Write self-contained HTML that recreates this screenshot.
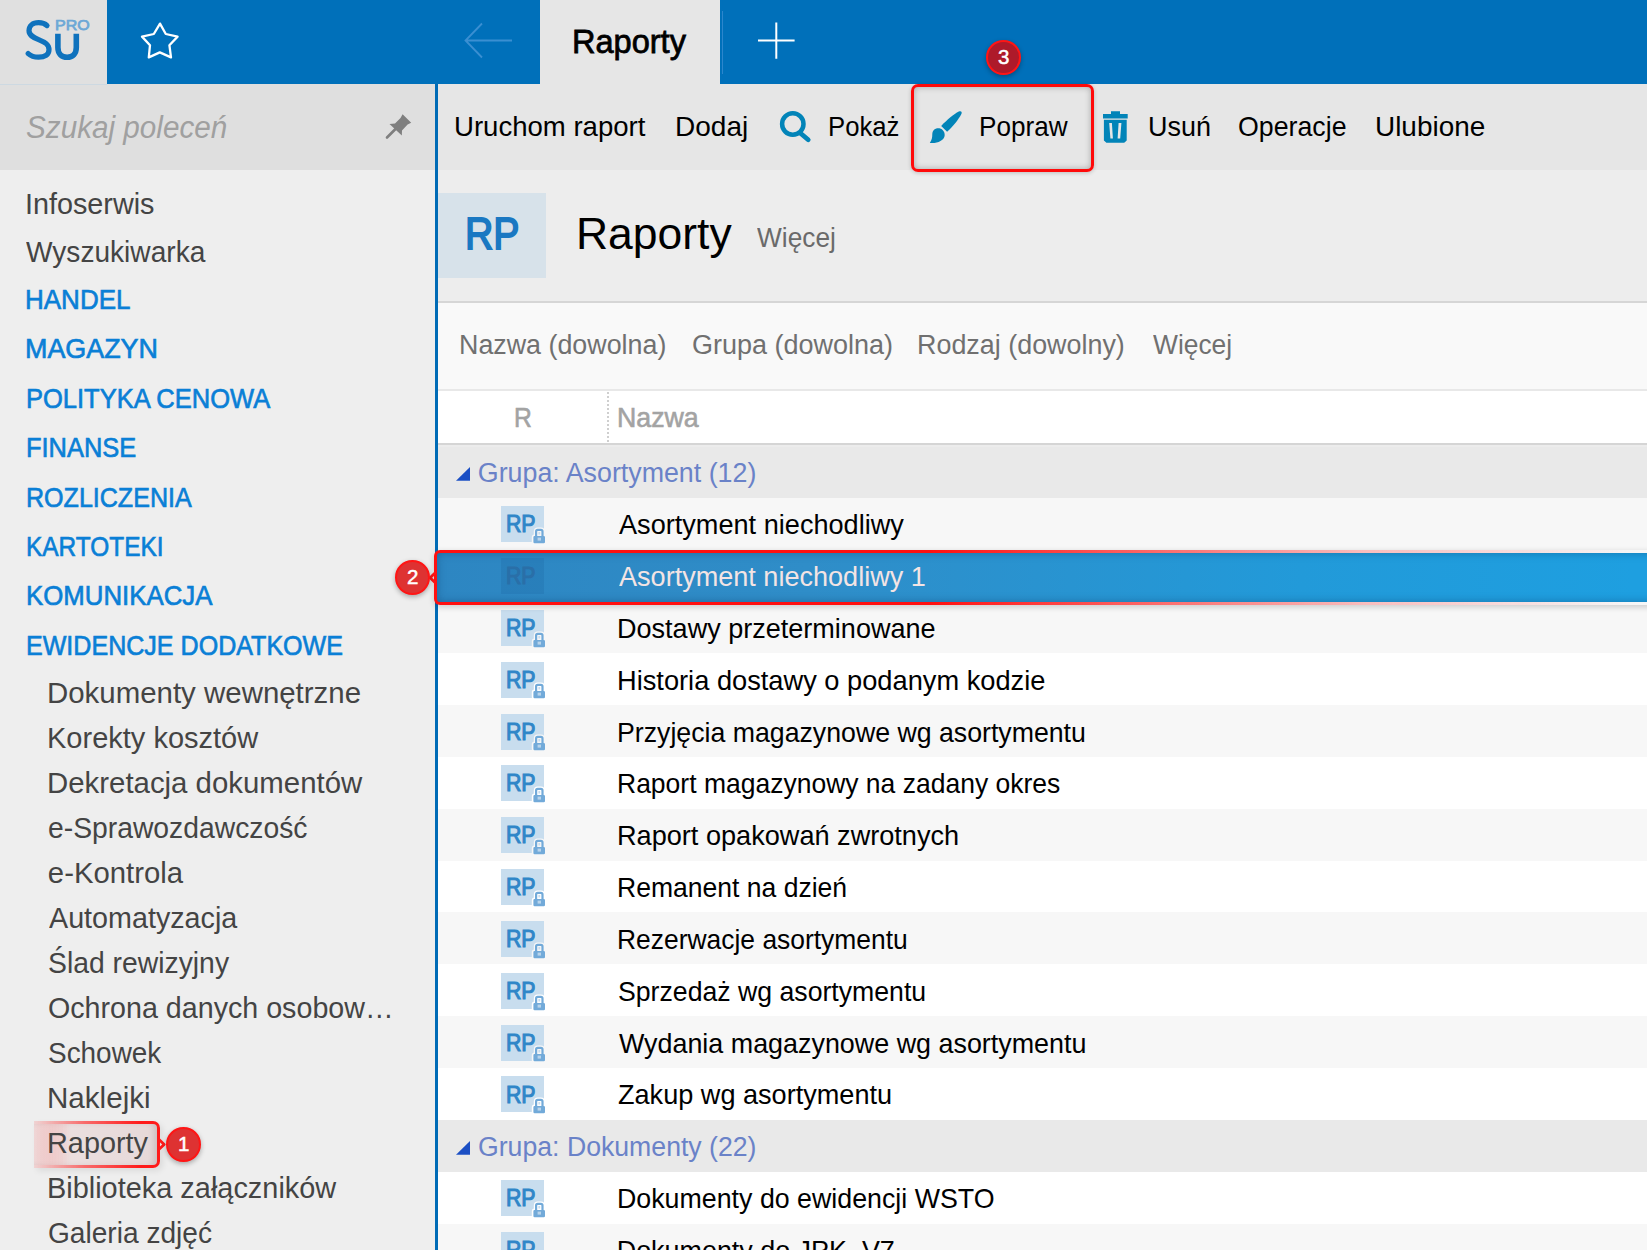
<!DOCTYPE html>
<html><head><meta charset="utf-8"><style>
html,body{margin:0;padding:0;}
body{width:1647px;height:1250px;overflow:hidden;position:relative;background:#eeeeee;font-family:"Liberation Sans",sans-serif;}
.t{position:absolute;white-space:nowrap;line-height:1;transform-origin:0 0;}
.r{position:absolute;}
</style></head><body>
<div class="r" style="left:0px;top:0px;width:107px;height:84px;background:#e0e0e0;"></div>
<div class="r" style="left:107px;top:0px;width:1540px;height:84px;background:#0070ba;"></div>
<svg class="r" style="left:0;top:0" width="200" height="84" viewBox="0 0 200 84">
<path d="M47 25.6 C44.8 23.4 42 22.7 38.6 22.7 C32.5 22.7 29 26 29 30.6 C29 35.2 32.6 37.2 38.6 39.6 C45 42.2 49 44.4 49 49.8 C49 54.6 44.8 57.2 38.6 57.2 C33.8 57.2 30.6 55.8 28.2 53.6" fill="none" stroke="#0f72bd" stroke-width="5.2" stroke-linecap="round"/>
<path d="M57.9 33.7 V47.6 C57.9 53.6 61.6 57.3 67.1 57.3 C72.6 57.3 76.3 53.6 76.3 47.6 V33.7" fill="none" stroke="#0f72bd" stroke-width="5.6"/>
<path d="M30 11.6 L35.8 22 L47.6 24.6 L39.4 33.2 L41 45.4 L29.8 40.4 L18.8 45.4 L20 33.2 L12 24.6 L23.8 22 Z" transform="translate(130,12)" fill="none" stroke="#fff" stroke-width="2.3" stroke-linejoin="round"/>
</svg>
<div class="t" style="left:54.66px;top:17.48px;font-size:15.2px;color:#6da8d6;transform:scaleX(1.0532);-webkit-text-stroke:0.75px #6da8d6;">PRO</div>
<svg class="r" style="left:455px;top:15px" width="70" height="52" viewBox="0 0 70 52">
<path d="M57 25.5 H11 M27 8.5 L10.5 25.5 L27 42.5" fill="none" stroke="#3a8fd2" stroke-width="1.8"/>
</svg>
<div class="r" style="left:540px;top:0px;width:180px;height:84px;background:#e6e6e6;"></div>
<div class="t" style="left:572.27px;top:23.70px;font-size:34px;color:#000;transform:scaleX(0.9567);-webkit-text-stroke:0.8px #000;">Raporty</div>
<div class="r" style="left:722px;top:11px;width:1px;height:63px;background:#2c86cc;"></div>
<svg class="r" style="left:750px;top:15px" width="52" height="52" viewBox="0 0 52 52">
<path d="M26.3 7.5 V43.8 M8 25.6 H44.6" fill="none" stroke="#fff" stroke-width="2"/>
</svg>
<div class="r" style="left:0px;top:84px;width:435px;height:1166px;background:#eeeeee;"></div>
<div class="r" style="left:107px;top:84px;width:328px;height:1px;background:#dfdfdf;"></div>
<div class="r" style="left:0px;top:84px;width:107px;height:1px;background:#cdd9e2;"></div>
<div class="r" style="left:0px;top:85px;width:435px;height:85px;background:#dfdfdf;"></div>
<div class="t" style="left:26.46px;top:112.35px;font-size:31px;color:#a0a0a0;font-style:italic;transform:scaleX(0.9572);">Szukaj poleceń</div>
<svg class="r" style="left:370px;top:100px" width="60" height="60" viewBox="0 0 60 60">
<path d="M32.6 14.3 L41.2 22.8 L37.6 24.6 L32 30.5 L31.8 35.5 L19.5 24 L25 23.5 L30.5 18 Z" fill="#7f7f7f"/>
<path d="M25.5 29 L17 37.5" stroke="#7f7f7f" stroke-width="2.6" stroke-linecap="round"/>
</svg>
<div class="r" style="left:435px;top:84px;width:3px;height:1166px;background:#006bb6;"></div>
<div class="t" style="left:25.12px;top:188.83px;font-size:29.5px;color:#444444;transform:scaleX(0.9752);">Infoserwis</div>
<div class="t" style="left:26.08px;top:237.23px;font-size:29.5px;color:#444444;transform:scaleX(0.9526);">Wyszukiwarka</div>
<div class="t" style="left:25.48px;top:285.07px;font-size:28.5px;color:#0a7fd6;transform:scaleX(0.9122);-webkit-text-stroke:0.7px #0a7fd6;">HANDEL</div>
<div class="t" style="left:25.41px;top:334.17px;font-size:28.5px;color:#0a7fd6;transform:scaleX(0.9431);-webkit-text-stroke:0.7px #0a7fd6;">MAGAZYN</div>
<div class="t" style="left:25.53px;top:384.07px;font-size:28.5px;color:#0a7fd6;transform:scaleX(0.8946);-webkit-text-stroke:0.7px #0a7fd6;">POLITYKA CENOWA</div>
<div class="t" style="left:25.53px;top:433.07px;font-size:28.5px;color:#0a7fd6;transform:scaleX(0.8918);-webkit-text-stroke:0.7px #0a7fd6;">FINANSE</div>
<div class="t" style="left:25.56px;top:482.77px;font-size:28.5px;color:#0a7fd6;transform:scaleX(0.8790);-webkit-text-stroke:0.7px #0a7fd6;">ROZLICZENIA</div>
<div class="t" style="left:25.62px;top:532.07px;font-size:28.5px;color:#0a7fd6;transform:scaleX(0.8566);-webkit-text-stroke:0.7px #0a7fd6;">KARTOTEKI</div>
<div class="t" style="left:25.50px;top:581.38px;font-size:28.5px;color:#0a7fd6;transform:scaleX(0.9057);-webkit-text-stroke:0.7px #0a7fd6;">KOMUNIKACJA</div>
<div class="t" style="left:25.56px;top:630.57px;font-size:28.5px;color:#0a7fd6;transform:scaleX(0.8793);-webkit-text-stroke:0.7px #0a7fd6;">EWIDENCJE DODATKOWE</div>
<div class="r" style="left:34px;top:1121px;width:126px;height:47px;box-sizing:border-box;border-radius:0 7px 7px 0;
border:3px solid transparent;border-left:0;
background:linear-gradient(90deg, rgba(236,226,226,0.2), #ebdfdf 30%, #e6d8d8) padding-box,
linear-gradient(90deg, rgba(255,20,20,0.12) 0%, rgba(255,20,20,0.6) 40%, #ff1a1a 85%) border-box;
box-shadow: inset -5px 0 6px -2px rgba(0,0,0,0.12), 3px 3px 6px rgba(0,0,0,0.08);"></div>
<svg class="r" style="left:155px;top:1134px" width="14" height="22" viewBox="0 0 14 22"><path d="M3.5 5 L9.2 10.4 L3.5 15.8" fill="none" stroke="#ff1a1a" stroke-width="2.8" stroke-linejoin="round"/></svg>
<div class="t" style="left:46.71px;top:678.00px;font-size:29.3px;color:#444444;transform:scaleX(1.0045);">Dokumenty wewnętrzne</div>
<div class="t" style="left:46.75px;top:723.00px;font-size:29.3px;color:#444444;transform:scaleX(0.9900);">Korekty kosztów</div>
<div class="t" style="left:46.72px;top:768.00px;font-size:29.3px;color:#444444;transform:scaleX(1.0029);">Dekretacja dokumentów</div>
<div class="t" style="left:47.89px;top:813.00px;font-size:29.3px;color:#444444;transform:scaleX(0.9658);">e-Sprawozdawczość</div>
<div class="t" style="left:47.85px;top:858.00px;font-size:29.3px;color:#444444;">e-Kontrola</div>
<div class="t" style="left:48.98px;top:903.00px;font-size:29.3px;color:#444444;transform:scaleX(0.9797);">Automatyzacja</div>
<div class="t" style="left:47.77px;top:948.00px;font-size:29.3px;color:#444444;transform:scaleX(0.9669);">Ślad rewizyjny</div>
<div class="t" style="left:47.76px;top:993.00px;font-size:29.3px;color:#444444;transform:scaleX(0.9779);">Ochrona danych osobow…</div>
<div class="t" style="left:47.79px;top:1038.00px;font-size:29.3px;color:#444444;transform:scaleX(0.9532);">Schowek</div>
<div class="t" style="left:46.70px;top:1083.00px;font-size:29.3px;color:#444444;transform:scaleX(1.0097);">Naklejki</div>
<div class="t" style="left:47.46px;top:1128.00px;font-size:29.3px;color:#444444;transform:scaleX(0.9848);">Raporty</div>
<div class="t" style="left:46.76px;top:1173.00px;font-size:29.3px;color:#444444;transform:scaleX(0.9867);">Biblioteka załączników</div>
<div class="t" style="left:47.66px;top:1218.00px;font-size:29.3px;color:#444444;transform:scaleX(0.9594);">Galeria zdjęć</div>
<div class="r" style="left:438px;top:84px;width:1209px;height:86px;background:#e6e6e6;"></div>
<div class="t" style="left:453.56px;top:112.80px;font-size:27.3px;color:#000;transform:scaleX(1.0093);">Uruchom raport</div>
<div class="t" style="left:675.29px;top:112.80px;font-size:27.3px;color:#000;transform:scaleX(1.0260);">Dodaj</div>
<div class="t" style="left:828.38px;top:112.80px;font-size:27.3px;color:#000;transform:scaleX(0.9412);">Pokaż</div>
<div class="t" style="left:978.95px;top:112.80px;font-size:27.3px;color:#000;transform:scaleX(0.9571);">Popraw</div>
<div class="t" style="left:1147.60px;top:112.80px;font-size:27.3px;color:#000;transform:scaleX(0.9871);">Usuń</div>
<div class="t" style="left:1237.98px;top:112.80px;font-size:27.3px;color:#000;transform:scaleX(0.9799);">Operacje</div>
<div class="t" style="left:1375.13px;top:112.80px;font-size:27.3px;color:#000;transform:scaleX(1.0230);">Ulubione</div>
<svg class="r" style="left:770px;top:100px" width="60" height="60" viewBox="0 0 60 60">
<circle cx="22.8" cy="24" r="10.7" fill="none" stroke="#0284b8" stroke-width="4.5"/>
<path d="M30.5 33.2 L38.2 39.8" stroke="#0284b8" stroke-width="4.8" stroke-linecap="round"/>
</svg>
<svg class="r" style="left:920px;top:100px" width="60" height="60" viewBox="0 0 60 60">
<path d="M21.2 25.9 C27 20 34 14 38.8 11.6 C41.2 10.4 42.3 12.2 41.4 14 C38.5 19.5 33 26.5 27.1 31.7 Z" fill="#0284b8"/>
<path d="M9.8 42.9 C11.8 40.2 12.3 37.5 12.3 34 C12.6 29.6 16 27.5 19.5 28.3 C23 29.2 25.3 32.5 24.6 36 C23.6 40.8 17.5 43.6 9.8 42.9 Z" fill="#0284b8"/>
</svg>
<svg class="r" style="left:1090px;top:100px" width="60" height="60" viewBox="0 0 60 60">
<path d="M21 11.3 H30 V13.9 H37.7 V18.5 H13 V13.9 H21 Z" fill="#0284b8"/>
<path d="M13.9 19.7 H36.7 V40.5 L34.2 42.8 H16.4 L13.9 40.5 Z M19.2 23 L20.4 38.5 H22.9 L21.9 23 Z M28.6 23 L27.6 38.5 H30.2 L31.4 23 Z" fill="#0284b8" fill-rule="evenodd"/>
</svg>
<div class="r" style="left:438px;top:170px;width:1209px;height:131px;background:#ededed;"></div>
<div class="r" style="left:438px;top:192.8px;width:108px;height:85px;background:#d7e2ea;"></div>
<div class="t" style="left:465.44px;top:211.35px;font-size:45px;color:#1a78c2;transform:scaleX(0.8726);-webkit-text-stroke:1.8px #1a78c2;">RP</div>
<div class="t" style="left:576.42px;top:211.15px;font-size:45px;color:#000;transform:scaleX(0.9878);">Raporty</div>
<div class="t" style="left:757.08px;top:224.65px;font-size:27px;color:#6a6a6a;transform:scaleX(0.9731);">Więcej</div>
<div class="r" style="left:438px;top:301px;width:1209px;height:2px;background:#d6d6d6;"></div>
<div class="r" style="left:438px;top:303px;width:1209px;height:86px;background:#f9f9f9;"></div>
<div class="t" style="left:459.26px;top:332.05px;font-size:27px;color:#707070;transform:scaleX(0.9939);">Nazwa (dowolna)</div>
<div class="t" style="left:691.92px;top:332.05px;font-size:27px;color:#707070;">Grupa (dowolna)</div>
<div class="t" style="left:917.36px;top:332.05px;font-size:27px;color:#707070;transform:scaleX(0.9963);">Rodzaj (dowolny)</div>
<div class="t" style="left:1153.08px;top:332.05px;font-size:27px;color:#707070;transform:scaleX(0.9769);">Więcej</div>
<div class="r" style="left:438px;top:389px;width:1209px;height:2px;background:#e8e8e8;"></div>
<div class="r" style="left:438px;top:391px;width:1209px;height:52px;background:#ffffff;"></div>
<div class="t" style="left:514.08px;top:403.62px;font-size:27.5px;color:#a3a3a3;transform:scaleX(0.8985);-webkit-text-stroke:0.6px #a3a3a3;">R</div>
<div class="t" style="left:617.11px;top:403.62px;font-size:27.5px;color:#a3a3a3;transform:scaleX(0.9713);-webkit-text-stroke:0.6px #a3a3a3;">Nazwa</div>
<div class="r" style="left:606.5px;top:392px;width:2px;height:54px;background:repeating-linear-gradient(180deg,#cfcfcf 0 2px,transparent 2px 4px)"></div>
<div class="r" style="left:438px;top:443px;width:1209px;height:2px;background:#d5d5d5;"></div>
<div class="r" style="left:438px;top:445px;width:1209px;height:2px;background:#ececec;"></div>
<div class="r" style="left:438px;top:447px;width:1209px;height:51px;background:#e9e9e9;"></div>
<svg class="r" style="left:450px;top:459.75px" width="26" height="26" viewBox="0 0 26 26"><path d="M20 7 V20.8 H6 Z" fill="#1b4fc4"/></svg>
<div class="t" style="left:477.82px;top:459.97px;font-size:26.8px;color:#6a82c8;">Grupa: Asortyment (12)</div>
<div class="r" style="left:438px;top:498px;width:1209px;height:51px;background:#f7f7f7;"></div>
<div class="r" style="left:501px;top:506.10px;width:43px;height:36px;background:#c8ddee"></div>
<div class="t" style="left:506.38px;top:512.20px;font-size:24px;color:#2f86c8;transform:scaleX(0.8863);-webkit-text-stroke:1.1px #2f86c8;">RP</div>
<svg class="r" style="left:531px;top:526.90px" width="17" height="19" viewBox="0 0 17 19">
<path d="M5.1 9 V4.4 Q5.1 2.8 6.7 2.8 H9.9 Q11.5 2.8 11.5 4.4 V9" fill="none" stroke="#f7f7f7" stroke-width="4.6"/>
<rect x="1.6" y="8.2" width="13.2" height="8.8" rx="2" fill="#72aad9" stroke="#f7f7f7" stroke-width="1.6"/>
<path d="M5.1 9 V4.4 Q5.1 2.8 6.7 2.8 H9.9 Q11.5 2.8 11.5 4.4 V9" fill="none" stroke="#72aad9" stroke-width="2.2"/>
<rect x="6.6" y="10.6" width="3.4" height="3" fill="#b8d4ec"/>
</svg>
<div class="t" style="left:618.87px;top:512.13px;font-size:26.9px;color:#000;transform:scaleX(1.0086);">Asortyment niechodliwy</div>
<div class="r" style="left:438px;top:549px;width:1209px;height:52px;background:#f7f7f7;"></div>
<div class="r" style="left:438px;top:601px;width:1209px;height:52px;background:#f7f7f7;"></div>
<div class="r" style="left:501px;top:609.80px;width:43px;height:36px;background:#c8ddee"></div>
<div class="t" style="left:506.38px;top:615.90px;font-size:24px;color:#2f86c8;transform:scaleX(0.8863);-webkit-text-stroke:1.1px #2f86c8;">RP</div>
<svg class="r" style="left:531px;top:630.60px" width="17" height="19" viewBox="0 0 17 19">
<path d="M5.1 9 V4.4 Q5.1 2.8 6.7 2.8 H9.9 Q11.5 2.8 11.5 4.4 V9" fill="none" stroke="#f7f7f7" stroke-width="4.6"/>
<rect x="1.6" y="8.2" width="13.2" height="8.8" rx="2" fill="#72aad9" stroke="#f7f7f7" stroke-width="1.6"/>
<path d="M5.1 9 V4.4 Q5.1 2.8 6.7 2.8 H9.9 Q11.5 2.8 11.5 4.4 V9" fill="none" stroke="#72aad9" stroke-width="2.2"/>
<rect x="6.6" y="10.6" width="3.4" height="3" fill="#b8d4ec"/>
</svg>
<div class="t" style="left:616.74px;top:615.83px;font-size:26.9px;color:#000;transform:scaleX(1.0054);">Dostawy przeterminowane</div>
<div class="r" style="left:438px;top:653px;width:1209px;height:52px;background:#ffffff;"></div>
<div class="r" style="left:501px;top:661.65px;width:43px;height:36px;background:#c8ddee"></div>
<div class="t" style="left:506.38px;top:667.75px;font-size:24px;color:#2f86c8;transform:scaleX(0.8863);-webkit-text-stroke:1.1px #2f86c8;">RP</div>
<svg class="r" style="left:531px;top:682.45px" width="17" height="19" viewBox="0 0 17 19">
<path d="M5.1 9 V4.4 Q5.1 2.8 6.7 2.8 H9.9 Q11.5 2.8 11.5 4.4 V9" fill="none" stroke="#ffffff" stroke-width="4.6"/>
<rect x="1.6" y="8.2" width="13.2" height="8.8" rx="2" fill="#72aad9" stroke="#ffffff" stroke-width="1.6"/>
<path d="M5.1 9 V4.4 Q5.1 2.8 6.7 2.8 H9.9 Q11.5 2.8 11.5 4.4 V9" fill="none" stroke="#72aad9" stroke-width="2.2"/>
<rect x="6.6" y="10.6" width="3.4" height="3" fill="#b8d4ec"/>
</svg>
<div class="t" style="left:616.72px;top:667.68px;font-size:26.9px;color:#000;transform:scaleX(1.0128);">Historia dostawy o podanym kodzie</div>
<div class="r" style="left:438px;top:705px;width:1209px;height:52px;background:#f7f7f7;"></div>
<div class="r" style="left:501px;top:713.50px;width:43px;height:36px;background:#c8ddee"></div>
<div class="t" style="left:506.38px;top:719.60px;font-size:24px;color:#2f86c8;transform:scaleX(0.8863);-webkit-text-stroke:1.1px #2f86c8;">RP</div>
<svg class="r" style="left:531px;top:734.30px" width="17" height="19" viewBox="0 0 17 19">
<path d="M5.1 9 V4.4 Q5.1 2.8 6.7 2.8 H9.9 Q11.5 2.8 11.5 4.4 V9" fill="none" stroke="#f7f7f7" stroke-width="4.6"/>
<rect x="1.6" y="8.2" width="13.2" height="8.8" rx="2" fill="#72aad9" stroke="#f7f7f7" stroke-width="1.6"/>
<path d="M5.1 9 V4.4 Q5.1 2.8 6.7 2.8 H9.9 Q11.5 2.8 11.5 4.4 V9" fill="none" stroke="#72aad9" stroke-width="2.2"/>
<rect x="6.6" y="10.6" width="3.4" height="3" fill="#b8d4ec"/>
</svg>
<div class="t" style="left:616.77px;top:719.53px;font-size:26.9px;color:#000;transform:scaleX(0.9928);">Przyjęcia magazynowe wg asortymentu</div>
<div class="r" style="left:438px;top:757px;width:1209px;height:52px;background:#ffffff;"></div>
<div class="r" style="left:501px;top:765.35px;width:43px;height:36px;background:#c8ddee"></div>
<div class="t" style="left:506.38px;top:771.45px;font-size:24px;color:#2f86c8;transform:scaleX(0.8863);-webkit-text-stroke:1.1px #2f86c8;">RP</div>
<svg class="r" style="left:531px;top:786.15px" width="17" height="19" viewBox="0 0 17 19">
<path d="M5.1 9 V4.4 Q5.1 2.8 6.7 2.8 H9.9 Q11.5 2.8 11.5 4.4 V9" fill="none" stroke="#ffffff" stroke-width="4.6"/>
<rect x="1.6" y="8.2" width="13.2" height="8.8" rx="2" fill="#72aad9" stroke="#ffffff" stroke-width="1.6"/>
<path d="M5.1 9 V4.4 Q5.1 2.8 6.7 2.8 H9.9 Q11.5 2.8 11.5 4.4 V9" fill="none" stroke="#72aad9" stroke-width="2.2"/>
<rect x="6.6" y="10.6" width="3.4" height="3" fill="#b8d4ec"/>
</svg>
<div class="t" style="left:616.78px;top:771.38px;font-size:26.9px;color:#000;transform:scaleX(0.9853);">Raport magazynowy na zadany okres</div>
<div class="r" style="left:438px;top:809px;width:1209px;height:52px;background:#f7f7f7;"></div>
<div class="r" style="left:501px;top:817.20px;width:43px;height:36px;background:#c8ddee"></div>
<div class="t" style="left:506.38px;top:823.30px;font-size:24px;color:#2f86c8;transform:scaleX(0.8863);-webkit-text-stroke:1.1px #2f86c8;">RP</div>
<svg class="r" style="left:531px;top:838.00px" width="17" height="19" viewBox="0 0 17 19">
<path d="M5.1 9 V4.4 Q5.1 2.8 6.7 2.8 H9.9 Q11.5 2.8 11.5 4.4 V9" fill="none" stroke="#f7f7f7" stroke-width="4.6"/>
<rect x="1.6" y="8.2" width="13.2" height="8.8" rx="2" fill="#72aad9" stroke="#f7f7f7" stroke-width="1.6"/>
<path d="M5.1 9 V4.4 Q5.1 2.8 6.7 2.8 H9.9 Q11.5 2.8 11.5 4.4 V9" fill="none" stroke="#72aad9" stroke-width="2.2"/>
<rect x="6.6" y="10.6" width="3.4" height="3" fill="#b8d4ec"/>
</svg>
<div class="t" style="left:616.73px;top:823.24px;font-size:26.9px;color:#000;transform:scaleX(1.0084);">Raport opakowań zwrotnych</div>
<div class="r" style="left:438px;top:861px;width:1209px;height:51px;background:#ffffff;"></div>
<div class="r" style="left:501px;top:869.05px;width:43px;height:36px;background:#c8ddee"></div>
<div class="t" style="left:506.38px;top:875.15px;font-size:24px;color:#2f86c8;transform:scaleX(0.8863);-webkit-text-stroke:1.1px #2f86c8;">RP</div>
<svg class="r" style="left:531px;top:889.85px" width="17" height="19" viewBox="0 0 17 19">
<path d="M5.1 9 V4.4 Q5.1 2.8 6.7 2.8 H9.9 Q11.5 2.8 11.5 4.4 V9" fill="none" stroke="#ffffff" stroke-width="4.6"/>
<rect x="1.6" y="8.2" width="13.2" height="8.8" rx="2" fill="#72aad9" stroke="#ffffff" stroke-width="1.6"/>
<path d="M5.1 9 V4.4 Q5.1 2.8 6.7 2.8 H9.9 Q11.5 2.8 11.5 4.4 V9" fill="none" stroke="#72aad9" stroke-width="2.2"/>
<rect x="6.6" y="10.6" width="3.4" height="3" fill="#b8d4ec"/>
</svg>
<div class="t" style="left:616.78px;top:875.08px;font-size:26.9px;color:#000;transform:scaleX(0.9867);">Remanent na dzień</div>
<div class="r" style="left:438px;top:912px;width:1209px;height:52px;background:#f7f7f7;"></div>
<div class="r" style="left:501px;top:920.90px;width:43px;height:36px;background:#c8ddee"></div>
<div class="t" style="left:506.38px;top:927.00px;font-size:24px;color:#2f86c8;transform:scaleX(0.8863);-webkit-text-stroke:1.1px #2f86c8;">RP</div>
<svg class="r" style="left:531px;top:941.70px" width="17" height="19" viewBox="0 0 17 19">
<path d="M5.1 9 V4.4 Q5.1 2.8 6.7 2.8 H9.9 Q11.5 2.8 11.5 4.4 V9" fill="none" stroke="#f7f7f7" stroke-width="4.6"/>
<rect x="1.6" y="8.2" width="13.2" height="8.8" rx="2" fill="#72aad9" stroke="#f7f7f7" stroke-width="1.6"/>
<path d="M5.1 9 V4.4 Q5.1 2.8 6.7 2.8 H9.9 Q11.5 2.8 11.5 4.4 V9" fill="none" stroke="#72aad9" stroke-width="2.2"/>
<rect x="6.6" y="10.6" width="3.4" height="3" fill="#b8d4ec"/>
</svg>
<div class="t" style="left:616.79px;top:926.94px;font-size:26.9px;color:#000;transform:scaleX(0.9826);">Rezerwacje asortymentu</div>
<div class="r" style="left:438px;top:964px;width:1209px;height:52px;background:#ffffff;"></div>
<div class="r" style="left:501px;top:972.75px;width:43px;height:36px;background:#c8ddee"></div>
<div class="t" style="left:506.38px;top:978.85px;font-size:24px;color:#2f86c8;transform:scaleX(0.8863);-webkit-text-stroke:1.1px #2f86c8;">RP</div>
<svg class="r" style="left:531px;top:993.55px" width="17" height="19" viewBox="0 0 17 19">
<path d="M5.1 9 V4.4 Q5.1 2.8 6.7 2.8 H9.9 Q11.5 2.8 11.5 4.4 V9" fill="none" stroke="#ffffff" stroke-width="4.6"/>
<rect x="1.6" y="8.2" width="13.2" height="8.8" rx="2" fill="#72aad9" stroke="#ffffff" stroke-width="1.6"/>
<path d="M5.1 9 V4.4 Q5.1 2.8 6.7 2.8 H9.9 Q11.5 2.8 11.5 4.4 V9" fill="none" stroke="#72aad9" stroke-width="2.2"/>
<rect x="6.6" y="10.6" width="3.4" height="3" fill="#b8d4ec"/>
</svg>
<div class="t" style="left:617.76px;top:978.78px;font-size:26.9px;color:#000;transform:scaleX(0.9913);">Sprzedaż wg asortymentu</div>
<div class="r" style="left:438px;top:1016px;width:1209px;height:52px;background:#f7f7f7;"></div>
<div class="r" style="left:501px;top:1024.60px;width:43px;height:36px;background:#c8ddee"></div>
<div class="t" style="left:506.38px;top:1030.70px;font-size:24px;color:#2f86c8;transform:scaleX(0.8863);-webkit-text-stroke:1.1px #2f86c8;">RP</div>
<svg class="r" style="left:531px;top:1045.40px" width="17" height="19" viewBox="0 0 17 19">
<path d="M5.1 9 V4.4 Q5.1 2.8 6.7 2.8 H9.9 Q11.5 2.8 11.5 4.4 V9" fill="none" stroke="#f7f7f7" stroke-width="4.6"/>
<rect x="1.6" y="8.2" width="13.2" height="8.8" rx="2" fill="#72aad9" stroke="#f7f7f7" stroke-width="1.6"/>
<path d="M5.1 9 V4.4 Q5.1 2.8 6.7 2.8 H9.9 Q11.5 2.8 11.5 4.4 V9" fill="none" stroke="#72aad9" stroke-width="2.2"/>
<rect x="6.6" y="10.6" width="3.4" height="3" fill="#b8d4ec"/>
</svg>
<div class="t" style="left:618.88px;top:1030.63px;font-size:26.9px;color:#000;">Wydania magazynowe wg asortymentu</div>
<div class="r" style="left:438px;top:1068px;width:1209px;height:52px;background:#ffffff;"></div>
<div class="r" style="left:501px;top:1076.45px;width:43px;height:36px;background:#c8ddee"></div>
<div class="t" style="left:506.38px;top:1082.55px;font-size:24px;color:#2f86c8;transform:scaleX(0.8863);-webkit-text-stroke:1.1px #2f86c8;">RP</div>
<svg class="r" style="left:531px;top:1097.25px" width="17" height="19" viewBox="0 0 17 19">
<path d="M5.1 9 V4.4 Q5.1 2.8 6.7 2.8 H9.9 Q11.5 2.8 11.5 4.4 V9" fill="none" stroke="#ffffff" stroke-width="4.6"/>
<rect x="1.6" y="8.2" width="13.2" height="8.8" rx="2" fill="#72aad9" stroke="#ffffff" stroke-width="1.6"/>
<path d="M5.1 9 V4.4 Q5.1 2.8 6.7 2.8 H9.9 Q11.5 2.8 11.5 4.4 V9" fill="none" stroke="#72aad9" stroke-width="2.2"/>
<rect x="6.6" y="10.6" width="3.4" height="3" fill="#b8d4ec"/>
</svg>
<div class="t" style="left:618.12px;top:1082.49px;font-size:26.9px;color:#000;transform:scaleX(1.0075);">Zakup wg asortymentu</div>
<div class="r" style="left:438px;top:1120px;width:1209px;height:52px;background:#e9e9e9;"></div>
<svg class="r" style="left:450px;top:1133.80px" width="26" height="26" viewBox="0 0 26 26"><path d="M20 7 V20.8 H6 Z" fill="#1b4fc4"/></svg>
<div class="t" style="left:477.83px;top:1134.02px;font-size:26.8px;color:#6a82c8;transform:scaleX(0.9946);">Grupa: Dokumenty (22)</div>
<div class="r" style="left:438px;top:1172px;width:1209px;height:52px;background:#ffffff;"></div>
<div class="r" style="left:501px;top:1180.15px;width:43px;height:36px;background:#c8ddee"></div>
<div class="t" style="left:506.38px;top:1186.25px;font-size:24px;color:#2f86c8;transform:scaleX(0.8863);-webkit-text-stroke:1.1px #2f86c8;">RP</div>
<svg class="r" style="left:531px;top:1200.95px" width="17" height="19" viewBox="0 0 17 19">
<path d="M5.1 9 V4.4 Q5.1 2.8 6.7 2.8 H9.9 Q11.5 2.8 11.5 4.4 V9" fill="none" stroke="#ffffff" stroke-width="4.6"/>
<rect x="1.6" y="8.2" width="13.2" height="8.8" rx="2" fill="#72aad9" stroke="#ffffff" stroke-width="1.6"/>
<path d="M5.1 9 V4.4 Q5.1 2.8 6.7 2.8 H9.9 Q11.5 2.8 11.5 4.4 V9" fill="none" stroke="#72aad9" stroke-width="2.2"/>
<rect x="6.6" y="10.6" width="3.4" height="3" fill="#b8d4ec"/>
</svg>
<div class="t" style="left:616.76px;top:1186.19px;font-size:26.9px;color:#000;transform:scaleX(0.9959);">Dokumenty do ewidencji WSTO</div>
<div class="r" style="left:438px;top:1224px;width:1209px;height:51px;background:#f7f7f7;"></div>
<div class="r" style="left:501px;top:1232.00px;width:43px;height:36px;background:#c8ddee"></div>
<div class="t" style="left:506.38px;top:1238.10px;font-size:24px;color:#2f86c8;transform:scaleX(0.8863);-webkit-text-stroke:1.1px #2f86c8;">RP</div>
<svg class="r" style="left:531px;top:1252.80px" width="17" height="19" viewBox="0 0 17 19">
<path d="M5.1 9 V4.4 Q5.1 2.8 6.7 2.8 H9.9 Q11.5 2.8 11.5 4.4 V9" fill="none" stroke="#f7f7f7" stroke-width="4.6"/>
<rect x="1.6" y="8.2" width="13.2" height="8.8" rx="2" fill="#72aad9" stroke="#f7f7f7" stroke-width="1.6"/>
<path d="M5.1 9 V4.4 Q5.1 2.8 6.7 2.8 H9.9 Q11.5 2.8 11.5 4.4 V9" fill="none" stroke="#72aad9" stroke-width="2.2"/>
<rect x="6.6" y="10.6" width="3.4" height="3" fill="#b8d4ec"/>
</svg>
<div class="t" style="left:616.75px;top:1238.04px;font-size:26.9px;color:#000;">Dokumenty do JPK_V7</div>
<div class="r" style="left:434px;top:550.05px;width:1240px;height:55px;box-sizing:border-box;
border:3px solid transparent;border-radius:6px 0 0 6px;
background:linear-gradient(90deg,#2d86c2 0%,#2f8dc8 30%,#229ad9 70%,#1e9fe0 97%) padding-box,
linear-gradient(90deg,#ff1010 0%,#ff1010 40%,rgba(255,16,16,0.25) 75%,rgba(255,16,16,0.0) 97%) border-box;
box-shadow: inset 0 0 8px rgba(0,40,80,0.35), 0 2px 6px rgba(0,0,0,0.18);"></div>
<div class="r" style="left:501px;top:557.95px;width:43px;height:36px;background:rgba(20,90,150,0.18)"></div>
<div class="t" style="left:506.38px;top:564.05px;font-size:24px;color:#2a6fa8;transform:scaleX(0.8863);-webkit-text-stroke:1.1px #2a6fa8;">RP</div>
<div class="t" style="left:618.67px;top:564.49px;font-size:26.9px;color:#f3e4e4;transform:scaleX(1.0063);">Asortyment niechodliwy 1</div>
<svg class="r" style="left:425px;top:568px" width="14" height="20" viewBox="0 0 14 20"><path d="M10.5 4.6 L5.2 9.8 L10.5 15" fill="none" stroke="#ff1515" stroke-width="2.8" stroke-linejoin="round"/></svg>
<div class="r" style="left:911px;top:84.3px;width:183px;height:87.5px;box-sizing:border-box;border:3px solid #ff0a0a;border-radius:7px;
box-shadow: inset 0 0 6px rgba(0,0,0,0.28), 0 1px 4px rgba(0,0,0,0.2);"></div>
<div class="r" style="left:986.10px;top:40.30px;width:34.80px;height:34.80px;box-sizing:border-box;border-radius:50%;
background:#ae1a2a;border:2.2px solid #ff1515;box-shadow:0 2px 5px rgba(0,0,0,0.3);"></div>
<div class="t" style="left:998.12px;top:46.88px;font-size:20.5px;color:#ffffff;-webkit-text-stroke:0.5px #fff;">3</div>
<div class="r" style="left:395.10px;top:560.40px;width:34.80px;height:34.80px;box-sizing:border-box;border-radius:50%;
background:#de3232;border:2.2px solid #ff1515;box-shadow:0 2px 5px rgba(0,0,0,0.3);"></div>
<div class="t" style="left:407.06px;top:566.98px;font-size:20.5px;color:#ffffff;-webkit-text-stroke:0.5px #fff;">2</div>
<div class="r" style="left:166.20px;top:1127.00px;width:34.80px;height:34.80px;box-sizing:border-box;border-radius:50%;
background:#de3232;border:2.2px solid #ff1515;box-shadow:0 2px 5px rgba(0,0,0,0.3);"></div>
<div class="t" style="left:177.91px;top:1133.58px;font-size:20.5px;color:#ffffff;-webkit-text-stroke:0.5px #fff;">1</div>
</body></html>
